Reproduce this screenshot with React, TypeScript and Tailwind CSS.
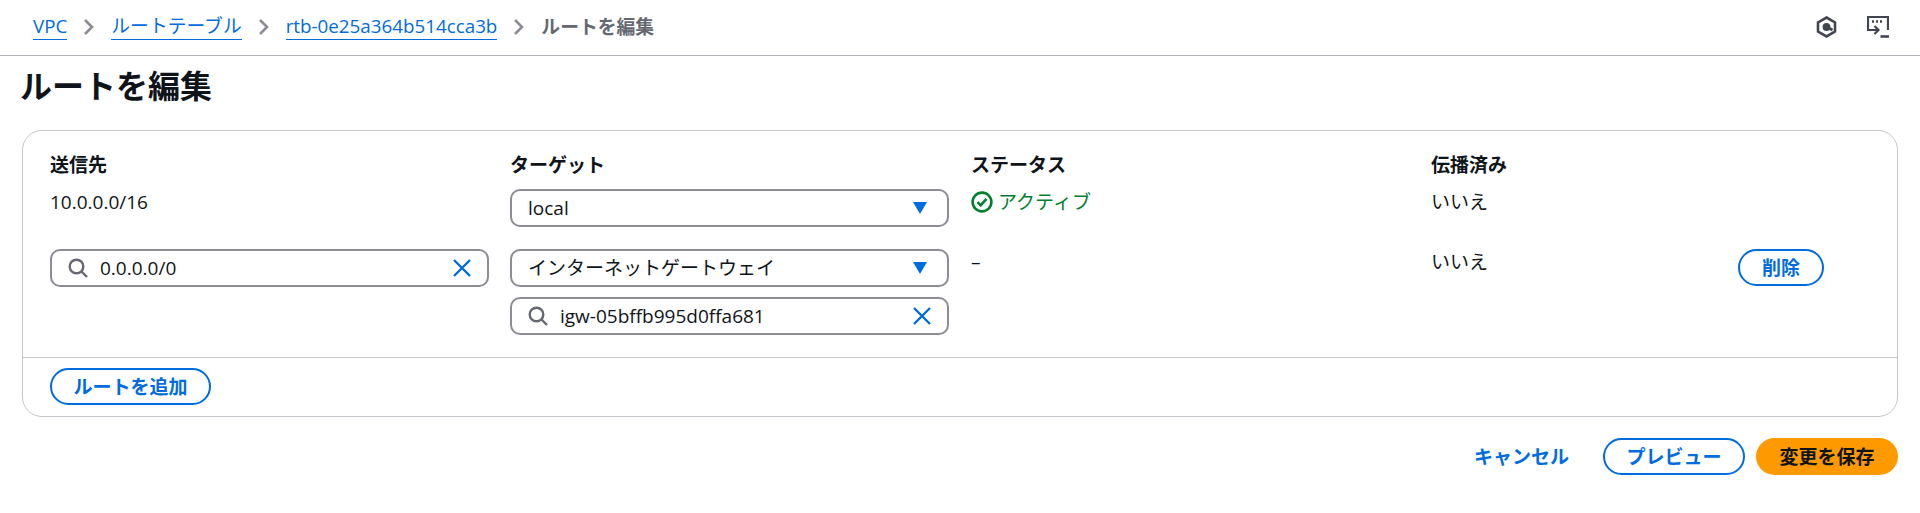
const font = "[font-family:'Open_Sans','Noto_Sans_CJK_JP',sans-serif]";

function Chevron() {
  return (
    <svg width="12" height="16" viewBox="0 0 12 16" fill="none" stroke="#8c8c94" strokeWidth="2.6" className="shrink-0">
      <path d="M2 1l7 7-7 7" />
    </svg>
  );
}

function SearchIcon() {
  return (
    <svg width="20" height="20" viewBox="0 0 20 20" fill="none" stroke="#656871" strokeWidth="2.4" className="shrink-0">
      <circle cx="8.5" cy="8.5" r="6.8" />
      <path d="M13.5 13.5l5.5 5.5" />
    </svg>
  );
}

function ClearIcon() {
  return (
    <svg width="18" height="18" viewBox="0 0 18 18" fill="none" stroke="#006ce0" strokeWidth="2.4" className="shrink-0">
      <path d="M1 1l16 16M17 1L1 17" />
    </svg>
  );
}

function CaretIcon() {
  return (
    <svg width="14" height="12" viewBox="0 0 14 12" fill="#006ce0" className="shrink-0">
      <path d="M0 0h14L7 12z" />
    </svg>
  );
}

function Search({ value }: { value: string }) {
  return (
    <div className="flex h-[38px] w-[439px] items-center rounded-[10px] border-2 border-[#8c8c94] bg-white px-[16px]">
      <SearchIcon />
      <span className="ml-[12px] flex-1 text-[#0f141a]">{value}</span>
      <ClearIcon />
    </div>
  );
}

function Select({ value }: { value: string }) {
  return (
    <div className="flex h-[38px] w-[439px] items-center justify-between rounded-[10px] border-2 border-[#8c8c94] bg-white pl-[16px] pr-[20px]">
      <span className="text-[#0f141a]">{value}</span>
      <CaretIcon />
    </div>
  );
}

function Outline({ children, className }: { children: React.ReactNode; className: string }) {
  return (
    <button className={`flex h-[37px] items-center justify-center rounded-full border-2 border-[#006ce0] bg-white font-bold text-[#006ce0] ${className}`}>
      {children}
    </button>
  );
}

export default function App() {
  return (
    <div className={`min-h-[513px] w-[1920px] bg-white text-[19px] leading-[26px] text-[#0f141a] ${font}`}>
      <nav className="flex h-[56px] items-center justify-between border-b border-[#b4b4bb] pb-[2px] pl-[33px] pr-[31px]">
        <div className="flex items-center gap-[16px] text-[18.8px]">
          <a className="border-b border-[#006ce0] text-[#006ce0]">VPC</a>
          <Chevron />
          <a className="border-b border-[#006ce0] text-[#006ce0]">ルートテーブル</a>
          <Chevron />
          <a className="border-b border-[#006ce0] text-[#006ce0]">rtb-0e25a364b514cca3b</a>
          <Chevron />
          <span className="font-bold text-[#656871]">ルートを編集</span>
        </div>
        <div className="flex items-center gap-[30px]">
          <svg width="21" height="22" viewBox="0 0 21 22" fill="none" stroke="#424650" strokeWidth="2.6">
            <path d="M10.5 1.5l8.5 4.9v9.2l-8.5 4.9L2 15.6V6.4z" />
            <circle cx="10.5" cy="11" r="2.6" fill="#424650" />
            <path d="M11 11l5.5 3" />
          </svg>
          <svg width="22" height="22" viewBox="0 0 22 22" fill="none" stroke="#424650" strokeWidth="2.2">
            <path d="M5 14H1V1h20v13" />
            <path d="M5 5.5h2M9 5.5h2M13 5.5h2" strokeWidth="2.4" />
            <path d="M3 14h8.5M7.5 10l4 4-4 4" />
            <path d="M13.5 20.5H22" strokeWidth="2.6" />
          </svg>
        </div>
      </nav>

      <main className="px-[22px]">
        <h1 className="-ml-[2px] flex h-[74px] items-start pt-[11px] text-[32px] font-bold leading-[38px]">ルートを編集</h1>

        <section className="rounded-[20px] border border-[#c6c6cd]">
          <div className="grid grid-cols-[440px_441px_440px_393px] gap-x-[20px] pb-[22px] pl-[27px] pt-[21px]">
            <div className="mb-[13px] h-[24px] font-bold">送信先</div>
            <div className="mb-[13px] h-[24px] font-bold">ターゲット</div>
            <div className="mb-[13px] h-[24px] font-bold">ステータス</div>
            <div className="mb-[13px] h-[24px] font-bold">伝播済み</div>

            <div className="mb-[22px]">10.0.0.0/16</div>
            <div className="mb-[22px]"><Select value="local" /></div>
            <div className="mb-[22px] flex items-center gap-[5px] self-start text-[#00802f]">
              <svg width="22" height="22" viewBox="0 0 22 22" fill="none" stroke="#00802f" strokeWidth="2.6" className="shrink-0">
                <circle cx="11" cy="11" r="9.4" />
                <path d="M6.5 11.2l3.2 3.2 5.8-6.6" />
              </svg>
              アクティブ
            </div>
            <div className="mb-[22px]">いいえ</div>

            <div><Search value="0.0.0.0/0" /></div>
            <div className="flex flex-col gap-[10px]">
              <Select value="インターネットゲートウェイ" />
              <Search value="igw-05bffb995d0ffa681" />
            </div>
            <div>–</div>
            <div className="flex items-start justify-between">
              <span>いいえ</span>
              <Outline className="w-[86px]">削除</Outline>
            </div>
          </div>
          <div className="border-t border-[#c6c6cd] pb-[11px] pl-[27px] pt-[10px]">
            <Outline className="w-[161px]">ルートを追加</Outline>
          </div>
        </section>

        <div className="mt-[21px] flex items-center justify-end">
          <button className="font-bold text-[#006ce0]">キャンセル</button>
          <Outline className="ml-[34px] w-[142px]">プレビュー</Outline>
          <button className="ml-[11px] flex h-[37px] w-[142px] items-center justify-center rounded-full bg-[#ff9900] font-bold text-[#0f141a]">変更を保存</button>
        </div>
      </main>
    </div>
  );
}
